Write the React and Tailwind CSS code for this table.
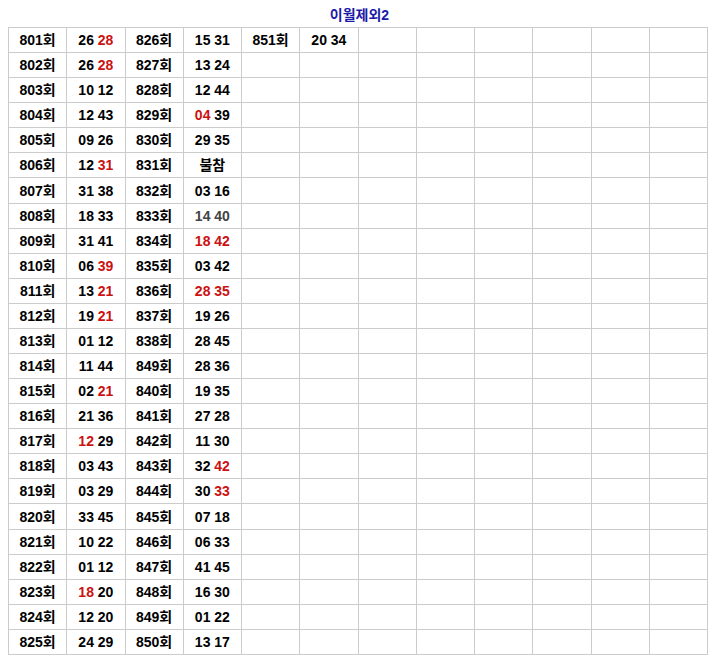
import React from "react";

// r: red number, g: gray number
const left = [
  ["801회", [["26"], ["28", "r"]]],
  ["802회", [["26"], ["28", "r"]]],
  ["803회", [["10"], ["12"]]],
  ["804회", [["12"], ["43"]]],
  ["805회", [["09"], ["26"]]],
  ["806회", [["12"], ["31", "r"]]],
  ["807회", [["31"], ["38"]]],
  ["808회", [["18"], ["33"]]],
  ["809회", [["31"], ["41"]]],
  ["810회", [["06"], ["39", "r"]]],
  ["811회", [["13"], ["21", "r"]]],
  ["812회", [["19"], ["21", "r"]]],
  ["813회", [["01"], ["12"]]],
  ["814회", [["11"], ["44"]]],
  ["815회", [["02"], ["21", "r"]]],
  ["816회", [["21"], ["36"]]],
  ["817회", [["12", "r"], ["29"]]],
  ["818회", [["03"], ["43"]]],
  ["819회", [["03"], ["29"]]],
  ["820회", [["33"], ["45"]]],
  ["821회", [["10"], ["22"]]],
  ["822회", [["01"], ["12"]]],
  ["823회", [["18", "r"], ["20"]]],
  ["824회", [["12"], ["20"]]],
  ["825회", [["24"], ["29"]]],
];

const right = [
  ["826회", [["15"], ["31"]]],
  ["827회", [["13"], ["24"]]],
  ["828회", [["12"], ["44"]]],
  ["829회", [["04", "r"], ["39"]]],
  ["830회", [["29"], ["35"]]],
  ["831회", [["불참"]]],
  ["832회", [["03"], ["16"]]],
  ["833회", [["14", "g"], ["40", "g"]]],
  ["834회", [["18", "r"], ["42", "r"]]],
  ["835회", [["03"], ["42"]]],
  ["836회", [["28", "r"], ["35", "r"]]],
  ["837회", [["19"], ["26"]]],
  ["838회", [["28"], ["45"]]],
  ["849회", [["28"], ["36"]]],
  ["840회", [["19"], ["35"]]],
  ["841회", [["27"], ["28"]]],
  ["842회", [["11"], ["30"]]],
  ["843회", [["32"], ["42", "r"]]],
  ["844회", [["30"], ["33", "r"]]],
  ["845회", [["07"], ["18"]]],
  ["846회", [["06"], ["33"]]],
  ["847회", [["41"], ["45"]]],
  ["848회", [["16"], ["30"]]],
  ["849회", [["01"], ["22"]]],
  ["850회", [["13"], ["17"]]],
];

function Nums({ list }) {
  return (
    <>
      {list.map(([n, c], i) => (
        <span key={i}>
          {i > 0 && " "}
          <span className={c === "r" ? "text-[#cc1111]" : c === "g" ? "text-[#444444]" : "text-black"}>{n}</span>
        </span>
      ))}
    </>
  );
}

const cell = "border border-[#cccccc] h-[25.08px] p-0 text-center align-middle";

export default function App() {
  return (
    <div
      className="bg-white w-[719px] h-[662px] font-bold text-[14px] leading-none text-black"
      style={{ fontFamily: '"Liberation Sans Narrow", "Liberation Sans", "Noto Sans CJK KR", sans-serif' }}
    >
      <div className="h-[27px] flex items-center justify-center pl-[0px] pt-[2px] text-[#1a1aa8] text-[14px]">
        이월제외2
      </div>
      <table className="ml-[8px] w-[700px] table-fixed border-collapse">
        <tbody>
          {left.map((row, i) => (
            <tr key={i}>
              <td className={cell}>{row[0]}</td>
              <td className={cell}><Nums list={row[1]} /></td>
              <td className={cell}>{right[i][0]}</td>
              <td className={cell}><Nums list={right[i][1]} /></td>
              <td className={cell}>{i === 0 ? "851회" : ""}</td>
              <td className={cell}>{i === 0 ? <Nums list={[["20"], ["34"]]} /> : ""}</td>
              <td className={cell}></td>
              <td className={cell}></td>
              <td className={cell}></td>
              <td className={cell}></td>
              <td className={cell}></td>
              <td className={cell}></td>
            </tr>
          ))}
        </tbody>
      </table>
    </div>
  );
}
